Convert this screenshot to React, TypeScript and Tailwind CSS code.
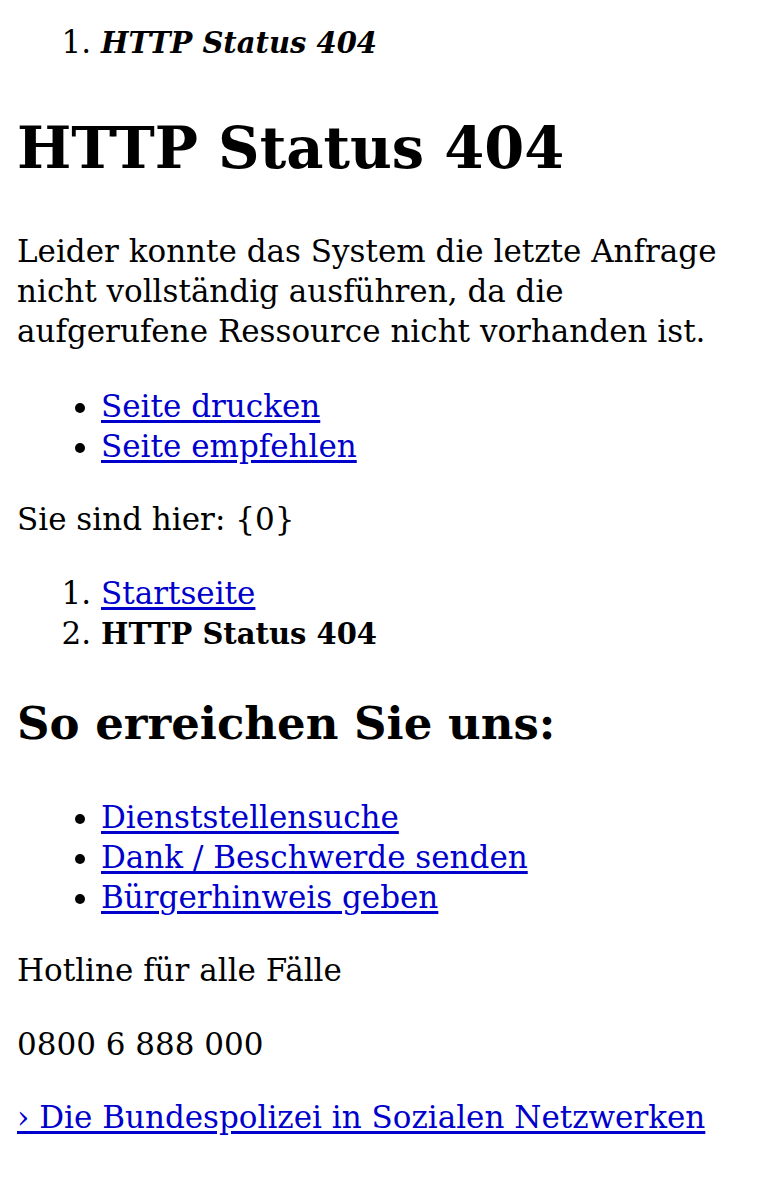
const serif = { fontFamily: '"DejaVu Serif", "Liberation Serif", serif' }

function Link(props: { children: React.ReactNode }) {
  return (
    <a href="#" className="text-[#0000cc] underline underline-offset-[3px]">
      {props.children}
    </a>
  )
}

export default function App() {
  return (
    <div className="min-h-[1200px] bg-white px-[17px] text-[31px] leading-[40px] text-black" style={serif}>
      <ol className="list-decimal pt-[22px] pl-[84px]">
        <li>
          <em className="text-[29px] font-bold italic">HTTP Status 404</em>
        </li>
      </ol>

      <h1 className="mt-[45px] text-[57.5px] font-bold leading-[80px]">HTTP Status 404</h1>

      <p className="mt-[43px]">
        Leider konnte das System die letzte Anfrage nicht vollständig ausführen, da die
        aufgerufene Ressource nicht vorhanden ist.
      </p>

      <ul className="mt-[35px] list-disc pl-[84px]">
        <li><Link>Seite drucken</Link></li>
        <li><Link>Seite empfehlen</Link></li>
      </ul>

      <p className="mt-[33px]">Sie sind hier: {"{0}"}</p>

      <ol className="mt-[34px] list-decimal pl-[84px]">
        <li><Link>Startseite</Link></li>
        <li><strong className="text-[29px] font-bold">HTTP Status 404</strong></li>
      </ol>

      <h2 className="mt-[40px] text-[45px] font-bold leading-[60px]">So erreichen Sie uns:</h2>

      <ul className="mt-[43px] list-disc pl-[84px]">
        <li><Link>Dienststellensuche</Link></li>
        <li><Link>Dank / Beschwerde senden</Link></li>
        <li><Link>Bürgerhinweis geben</Link></li>
      </ul>

      <p className="mt-[33px]">Hotline für alle Fälle</p>
      <p className="mt-[34px]">0800 6 888 000</p>
      <p className="mt-[33px]">
        <Link>› Die Bundespolizei in Sozialen Netzwerken</Link>
      </p>
    </div>
  )
}
